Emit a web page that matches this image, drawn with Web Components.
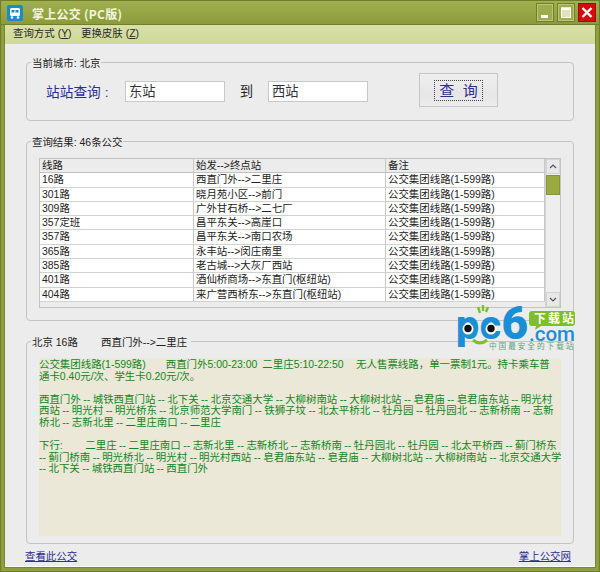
<!DOCTYPE html>
<html lang="zh"><head><meta charset="utf-8"><title>掌上公交</title>
<style>
html,body{margin:0;padding:0;height:572px;width:600px;overflow:hidden;background:#8f9f3f}
body{font:10.45px/12px "Liberation Sans","Noto Sans CJK SC",sans-serif;color:#222}
</style></head><body>
<bus-window>
  <bus-titlebar slot="title">掌上公交 (PC版)</bus-titlebar>
  <bus-menu slot="menu"></bus-menu>
  <bus-group style="--h:65px;--mb:14px">
    <span slot="legend">当前城市: 北京</span>
    <bus-search></bus-search>
  </bus-group>
  <bus-group style="--h:186px;--mb:14px;--pad:11px 12px 0">
    <span slot="legend">查询结果: 46条公交</span>
    <bus-table></bus-table>
  </bus-group>
  <bus-group style="--h:209px;--mb:0;--pad:11px 12px 0">
    <span slot="legend" style="margin-right:3px">北京 16路 &nbsp; &nbsp; &nbsp; &nbsp;西直门外--&gt;二里庄</span>
    <bus-detail></bus-detail>
  </bus-group>
  <bus-footer></bus-footer>
  <bus-logo></bus-logo>
</bus-window>
<script>
function def(name,html,init){
  customElements.define(name,class extends HTMLElement{
    constructor(){super();this.attachShadow({mode:'open'}).innerHTML=html;}
    connectedCallback(){if(init)init(this.shadowRoot,this);}
  });
}
const UI='"Liberation Sans","Noto Sans CJK SC",sans-serif';

def('bus-window',`<style>
:host{display:flex;flex-direction:column;width:600px;height:572px;box-sizing:border-box;position:relative;
 background:#8f9f3f;border:1px solid #6d7d28}
.inner{flex:1;display:flex;flex-direction:column;margin:0 3px 3px;border:1px solid #77872d;border-top:0;background:#ececec;box-shadow:inset 0 -1px 0 #fff;min-height:0}
.body{flex:1;padding:12px 21px 0;display:flex;flex-direction:column;min-height:0}
</style>
<slot name="title"></slot>
<div class="inner"><slot name="menu"></slot><div class="body"><slot></slot></div></div>`);

def('bus-titlebar',`<style>
:host{display:flex;align-items:center;height:24px;flex:none;box-sizing:border-box;padding:0 3px 0 6px;
 background:linear-gradient(#a1b04e,#8b9b3c);border-bottom:1px solid #6f7f2b;
 font:bold 12px/14px "Noto Sans CJK SC",sans-serif;color:#fff}
svg.i{width:16px;height:16px;margin-right:9px;flex:none}
.t{flex:1;color:#f2f5df;letter-spacing:.25px;padding-top:2px}
.b{width:18px;height:19px;box-sizing:border-box;margin-left:3px;display:block;flex:none}
</style>
<svg class="i" viewBox="0 0 16 16"><rect width="16" height="16" rx="2" fill="#1c8cc4"/><rect x="3" y="3" width="10" height="8" rx="1.5" fill="#fff"/><rect x="4.5" y="5" width="3" height="2.5" fill="#1c8cc4"/><rect x="8.5" y="5" width="3" height="2.5" fill="#1c8cc4"/><circle cx="5" cy="12.5" r="1.3" fill="#fff"/><circle cx="11" cy="12.5" r="1.3" fill="#fff"/></svg>
<span class="t"><slot></slot></span>
<svg class="b" viewBox="0 0 18 19"><rect x=".5" y=".5" width="17" height="18" fill="#9dad4c" stroke="#6f7f2b"/><rect x="1.5" y="1.5" width="15" height="16" fill="none" stroke="#b9c677"/><rect x="5" y="12" width="7" height="3" fill="#fff"/></svg>
<svg class="b" viewBox="0 0 18 19"><rect x=".5" y=".5" width="17" height="18" fill="#9dad4c" stroke="#6f7f2b"/><rect x="1.5" y="1.5" width="15" height="16" fill="none" stroke="#b9c677"/><rect x="4.5" y="5" width="9" height="9.5" fill="#dfe5b8" stroke="#fff"/><rect x="4" y="4.5" width="10" height="2.5" fill="#fff"/></svg>
<svg class="b" viewBox="0 0 18 19"><rect width="18" height="19" fill="#d40c0c"/><rect x=".5" y=".5" width="17" height="18" fill="none" stroke="#a80808"/><path d="M4.5 5 L13.5 14 M13.5 5 L4.5 14" stroke="#fff" stroke-width="2.4"/></svg>`);

def('bus-menu',`<style>
:host{display:flex;align-items:center;height:19px;flex:none;padding:0 0 1px 8px;box-sizing:border-box;gap:10px;
 background:linear-gradient(#d8e0a6,#cfd998);color:#2a2a2a;font:10.45px/12px ${UI}}
span{width:58px;white-space:nowrap}
u{text-decoration:underline}
</style><span>查询方式 (<u>Y</u>)</span><span>更换皮肤 (<u>Z</u>)</span>`);

def('bus-group',`<style>
:host{display:block;flex:none;margin-bottom:var(--mb,0)}
fieldset{box-sizing:border-box;height:var(--h);margin:0;padding:0;border:1px solid #c3c3c3;border-radius:4px;min-width:0}
legend{padding:0 1px;margin-left:4px;font:10.45px/16px ${UI};color:#222;height:12px}
.c{padding:var(--pad,0)}
</style><fieldset><legend><slot name="legend"></slot></legend><div class="c"><slot></slot></div></fieldset>`);

def('bus-search',`<style>
:host{display:flex;align-items:flex-start;height:46px;padding-left:19px;font-family:${UI};color:#222}
.l{font-size:13.7px;line-height:24px;height:21px;color:#2b2f92;width:79px;margin-top:13px;white-space:nowrap}
.l i{font-style:normal;margin-left:4px}
.f{width:100px;height:21px;box-sizing:border-box;margin-top:13px;border:1px solid #c9c9c9;background:#fff;font-size:13.3px;line-height:19px;padding-left:3px;color:#333}
.to{width:43px;text-align:center;font-size:13.3px;line-height:21px;margin-top:13px}
.btn{width:79px;height:34px;box-sizing:border-box;margin:5px 0 0 51px;border:1px solid #c6c6c6;background:linear-gradient(#efefef,#e6e6e6 60%,#ececec);display:flex;align-items:center;justify-content:center;font-size:15px;color:#2b2f92}
.btn span{border:1px dotted #444;padding:0 1px;line-height:19px;width:45px;height:19px;box-sizing:content-box;text-align:center;white-space:pre}
</style>
<span class="l">站站查询<i>:</i></span><div class="f">东站</div><span class="to">到</span><div class="f">西站</div>
<div class="btn"><span>查  询</span></div>`);

const rows=[['16路','西直门外--&gt;二里庄'],['301路','晓月苑小区--&gt;前门'],['309路','广外甘石桥--&gt;二七厂'],['357定班','昌平东关--&gt;高崖口'],['357路','昌平东关--&gt;南口农场'],['365路','永丰站--&gt;闵庄南里'],['385路','老古城--&gt;大灰厂西站'],['401路','酒仙桥商场--&gt;东直门(枢纽站)'],['404路','来广营西桥东--&gt;东直门(枢纽站)']];
def('bus-table',`<style>
:host{display:flex;height:150px;box-sizing:border-box;border:1px solid #c3c3c3;background:#ececec;font:10.45px/12px ${UI};color:#222}
.g{flex:1;display:grid;grid-template-columns:154px 192px 1fr;grid-auto-rows:14.3px;align-content:start;min-width:0}
.c{background:#fff;padding-left:2px;border-right:1px solid #c8c8c8;border-bottom:1px solid #d2d2d2;white-space:nowrap;overflow:hidden;box-sizing:border-box;line-height:14px}
.h{background:#ececec;border-bottom:1px solid #c2c2c2}
.s{width:14px;flex:none;display:flex;flex-direction:column;border-left:1px solid #d4d4d4;background:#eeeeee}
.a{height:15px;flex:none;box-sizing:border-box;background:#e8e8e8;border:1px solid #d4d4d4}
.a svg{display:block;width:100%;height:100%}
.th{height:20px;margin:1px 0 0;background:#9aaa3e;border:1px solid #86963a;box-sizing:border-box;flex:none}
.sp{flex:1}
</style><div class="g" id="g"></div>
<div class="s"><div class="a"><svg viewBox="0 0 12 13"><path d="M3 8 L6 5 L9 8" fill="none" stroke="#555" stroke-width="1.2"/></svg></div><div class="th"></div><div class="sp"></div><div class="a"><svg viewBox="0 0 12 13"><path d="M3 5 L6 8 L9 5" fill="none" stroke="#555" stroke-width="1.2"/></svg></div></div>`,
(r)=>{let h='<div class="c h">线路</div><div class="c h">始发--&gt;终点站</div><div class="c h">备注</div>';
 for(const x of rows)h+=`<div class="c">${x[0]}</div><div class="c">${x[1]}</div><div class="c">公交集团线路(1-599路)</div>`;
 r.getElementById('g').innerHTML=h;});

def('bus-detail',`<style>
:host{display:block;height:178px;box-sizing:border-box;background:#ebe8d8;color:#12861c;font:10.45px/11.6px ${UI};padding-top:1px;word-spacing:-.4px;white-space:pre;overflow:hidden}
</style>公交集团线路(1-599路)        西直门外5:00-23:00  二里庄5:10-22:50     无人售票线路，单一票制1元。持卡乘车普
通卡0.40元/次、学生卡0.20元/次。

西直门外 -- 城铁西直门站 -- 北下关 -- 北京交通大学 -- 大柳树南站 -- 大柳树北站 -- 皂君庙 -- 皂君庙东站 -- 明光村
西站 -- 明光村 -- 明光桥东 -- 北京师范大学南门 -- 铁狮子坟 -- 北太平桥北 -- 牡丹园 -- 牡丹园北 -- 志新桥南 -- 志新
桥北 -- 志新北里 -- 二里庄南口 -- 二里庄

下行:         二里庄 -- 二里庄南口 -- 志新北里 -- 志新桥北 -- 志新桥南 -- 牡丹园北 -- 牡丹园 -- 北太平桥西 -- 蓟门桥东
-- 蓟门桥南 -- 明光桥北 -- 明光村 -- 明光村西站 -- 皂君庙东站 -- 皂君庙 -- 大柳树北站 -- 大柳树南站 -- 北京交通大学
-- 北下关 -- 城铁西直门站 -- 西直门外`);

def('bus-footer',`<style>
:host{display:flex;justify-content:space-between;padding:7px 3px 0 0;margin-left:-1px;font:10.45px/12px ${UI};color:#2b2f92}
a{color:inherit;text-decoration:underline}
</style><a href="#a">查看此公交</a><a href="#b">掌上公交网</a>`);

def('bus-logo',`<style>
:host{position:absolute;left:452px;top:302px;width:124px;height:48px;display:block}
svg{display:block;width:124px;height:48px;overflow:visible}
text{font-family:Roboto,"Noto Sans CJK SC",sans-serif}
</style>
<svg viewBox="0 0 124 48">
<path d="M25 4 l2 6 M30 2 l0 6 M35 4 l-2 5" stroke="#7fbf2e" stroke-width="2.4" fill="none"/>
<text x="3" y="36" font-size="41" font-weight="900" fill="#1b8fd6" letter-spacing=".6">pc<tspan font-size="46">6</tspan></text>
<circle cx="15" cy="26" r="5.5" fill="#fff"/><circle cx="15" cy="25.5" r="3.7" fill="#111"/>
<circle cx="38" cy="26" r="5.5" fill="#fff"/><circle cx="38" cy="25.5" r="3.7" fill="#111"/>
<path d="M20 37 q7 6 14 0" stroke="#7fbf2e" stroke-width="3" fill="none"/>
<path d="M79 8 h40 a3 3 0 0 1 3 3 v9 a3 3 0 0 1 -3 3 h-31 l-6 4 l1 -4 h-4 a3 3 0 0 1 -3 -3 v-9 a3 3 0 0 1 3 -3z" fill="#7ebd2c"/>
<text x="81" y="20" font-size="12" font-weight="700" fill="#fff" letter-spacing="2">下载站</text>
<text x="76" y="38" font-size="19.5" font-weight="500" fill="#1b8fd6" textLength="46" lengthAdjust="spacingAndGlyphs">.com</text>
<text x="36" y="46" font-size="7.6" fill="#5da27c" letter-spacing="2">中国最安全的下载站</text>
</svg>`);
</script>
</body></html>
